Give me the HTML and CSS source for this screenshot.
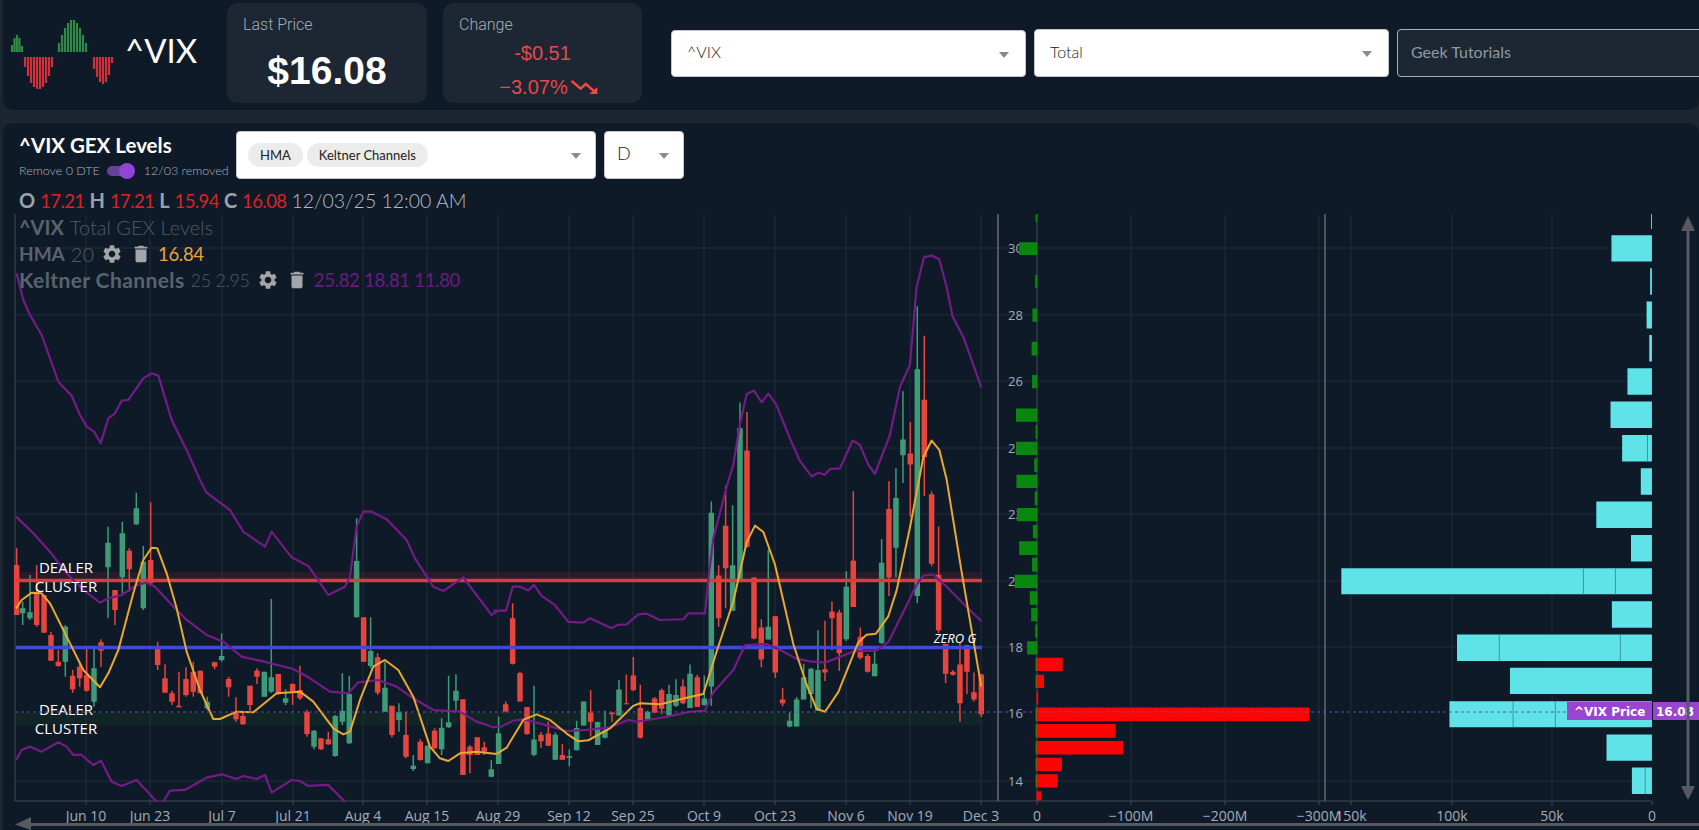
FILE: index.html
```html
<!DOCTYPE html>
<html lang="en">
<head>
<meta charset="utf-8">
<title>^VIX GEX Levels</title>
<link rel="stylesheet" href="styles.css">
</head>
<body>
<svg class="defs" width="0" height="0" aria-hidden="true">
  <symbol id="gear" viewBox="0 0 24 24"><path d="M19.14 12.94c.04-.3.06-.61.06-.94 0-.32-.02-.64-.07-.94l2.03-1.58c.18-.14.23-.41.12-.61l-1.92-3.32c-.12-.22-.37-.29-.59-.22l-2.39.96c-.5-.38-1.03-.7-1.62-.94l-.36-2.54c-.04-.24-.24-.41-.48-.41h-3.84c-.24 0-.43.17-.47.41l-.36 2.54c-.59.24-1.13.57-1.62.94l-2.39-.96c-.22-.08-.47 0-.59.22L2.74 8.87c-.12.21-.08.47.12.61l2.03 1.58c-.05.3-.09.63-.09.94s.02.64.07.94l-2.03 1.58c-.18.14-.23.41-.12.61l1.92 3.32c.12.22.37.29.59.22l2.39-.96c.5.38 1.03.7 1.62.94l.36 2.54c.05.24.24.41.48.41h3.84c.24 0 .44-.17.47-.41l.36-2.54c.59-.24 1.13-.56 1.62-.94l2.39.96c.22.08.47 0 .59-.22l1.92-3.32c.12-.22.07-.47-.12-.61l-2.01-1.58zM12 15.6c-1.98 0-3.6-1.62-3.6-3.6s1.62-3.6 3.6-3.6 3.6 1.62 3.6 3.6-1.62 3.6-3.6 3.6z"/></symbol>
  <symbol id="trash" viewBox="0 0 24 24"><path d="M6 19c0 1.1.9 2 2 2h8c1.1 0 2-.9 2-2V7H6v12zM19 4h-3.5l-1-1h-5l-1 1H5v2h14V4z"/></symbol>
</svg>

<header class="top">
  <div class="brand">
    <svg class="logo" viewBox="0 0 105 75" width="105" height="75" aria-hidden="true">
      <path class="logo-g" d="M2 35V28M4.500 35V21M7 35V18M9.500 35V21M12 35V29M49 35V26M52 35V18M55 35V11M58 35V6M61 35V3M64 35V3M67 35V6M70 35V11M73 35V18M76 35V26"/>
      <path class="logo-r" d="M15 40V50M18 40V59M21 40V66M24 40V70M27 40V72M30 40V72M33 40V70M36 40V66M39 40V59M42 40V50M84 40V52M87 40V60M90 40V65M93 40V67M96 40V65M99 40V58M102 40V46"/>
    </svg>
    <span class="symbol">^VIX</span>
  </div>
  <section class="card">
    <div class="card-label">Last Price</div>
    <div class="price">$16.08</div>
  </section>
  <section class="card">
    <div class="card-label">Change</div>
    <div class="delta">-$0.51</div>
    <div class="delta delta-pct">−3.07%<svg class="trend" viewBox="0 0 24 24" width="32" height="28" preserveAspectRatio="none" aria-hidden="true"><path d="M16 18l2.290-2.290-4.880-4.880-4 4L2 7.410 3.410 6l6 6 4-4 6.300 6.290L22 12v6z"/></svg></div>
  </section>
  <div class="controls">
    <div class="select select-top"><span>^VIX</span><i class="caret"></i></div>
    <div class="select"><span>Total</span><i class="caret"></i></div>
    <div class="search">Geek Tutorials</div>
  </div>
</header>

<main class="panel">
  <div class="panel-head">
    <div class="title-block">
      <h1 class="title">^VIX GEX Levels</h1>
      <div class="toggle-row">
        <span>Remove 0 DTE</span>
        <span class="toggle"><i class="thumb"></i></span>
        <span>12/03 removed</span>
      </div>
    </div>
    <div class="select multi">
      <span class="chip">HMA</span>
      <span class="chip">Keltner Channels</span>
      <i class="caret"></i>
    </div>
    <div class="select period"><span>D</span><i class="caret"></i></div>
  </div>

  <div class="ohlc">
    <b>O</b><em>17.21</em><b>H</b><em>17.21</em><b>L</b><em>15.94</em><b>C</b><em>16.08</em><span>12/03/25 12:00 AM</span>
  </div>

  <div class="chart-wrap">
    <div class="legend">
      <div class="legend-row"><b>^VIX</b> <span>Total GEX Levels</span></div>
      <div class="legend-row"><b class="name-hma">HMA</b> <span>20</span><svg class="ico"><use href="#gear"/></svg><svg class="ico"><use href="#trash"/></svg><span class="v-hma">16.84</span></div>
      <div class="legend-row"><b class="name-kc">Keltner Channels</b> <span class="kc-params">25 2.95</span><svg class="ico"><use href="#gear"/></svg><svg class="ico"><use href="#trash"/></svg><span class="v-kc">25.82 18.81 11.80</span></div>
    </div>

    <svg class="chart" viewBox="3 214 1696 616" width="1696" height="616" role="img" aria-label="^VIX candlestick chart with gamma exposure bars">
      <!-- grid -->
      <path class="grid" d="M15 248H1652M15 315H1652M15 381H1652M15 448H1652M15 514H1652M15 581H1652M15 647H1652M15 781H1652M86 214V801M150 214V801M222 214V801M293 214V801M363 214V801M427 214V801M498 214V801M569 214V801M633 214V801M704 214V801M775 214V801M846 214V801M910 214V801M981 214V801M1131 214V801M1225 214V801M1319 214V801M1351 214V801M1452 214V801M1552 214V801"/>
      <path class="axis" d="M15 214V801H1652M86 801V805M150 801V805M222 801V805M293 801V805M363 801V805M427 801V805M498 801V805M569 801V805M633 801V805M704 801V805M775 801V805M846 801V805M910 801V805M981 801V805M1037 214V801M1037 801V805M1131 801V805M1225 801V805M1319 801V805M1351 801V805M1452 801V805M1552 801V805M1652 801V805"/>

      <!-- dealer bands -->
      <rect class="band-red" x="16" y="572" width="966" height="10"/>
      <rect class="band-green" x="16" y="713" width="966" height="12"/>

      <!-- candles -->
      <g transform="translate(0,480) scale(.3333)">
        <path class="wick red" d="M50 205V405M110 255V440M132 345V458M153 455V542M175 510V560M218 570V638M239 545V620M260 505V635M303 478V560M345 330V435M388 205V335M452 67V318M473 485V570M495 553V638M516 632V675M537 575V682M558 562V650M580 545V650M601 572V640M644 545V568M686 590V650M708 652V725M729 695V735M750 617V695M771 565V612M835 582V645M878 610V675M900 557V660M921 690V770M963 775V810M985 755V795M1091 412V545M1133 520V645M1176 677V772M1218 695V835M1261 778V842M1304 745V808M1389 658V885M1410 795V880M1432 772V825M1453 785V825"/>
        <path class="body red" d="M50 255V405M110 340V435M132 345V458M153 465V542M175 545V558M218 587V628M239 560V595M260 585V632M303 487V512M345 330V390M388 212V268M452 240V310M473 505V555M495 595V638M516 640V665M537 677V682M558 597V645M580 575V635M601 572V640M644 547V560M686 597V622M708 697V718M729 708V733M750 617V675M771 572V590M835 582V640M878 612V635M900 630V655M921 697V762M963 775V808M985 778V793M1091 412V545M1133 532V638M1176 677V765M1218 765V830M1261 785V840M1304 752V805M1389 658V885M1410 800V825M1432 772V825M1453 802V815"/>
        <path class="wick green" d="M68 365V435M90 285V420M196 435V590M282 500V680M324 140V415M367 125V340M409 38V135M430 198V390M622 650V690M665 460V545M793 575V650M814 357V638M857 628V675M942 750V808M1006 705V830M1027 580V735M1048 587V792M1070 115V412M1112 412V565M1155 545V695M1197 670V755M1240 825V873M1283 797V850M1325 715V825M1346 587V743M1368 583V690M1474 840V892M1496 710V852"/>
        <path class="body green" d="M68 385V400M90 397V415M196 440V545M282 565V665M324 188V262M367 160V292M409 85V133M430 245V385M622 665V685M665 528V540M793 575V650M814 592V635M857 655V668M942 752V800M1006 708V828M1027 692V725M1048 642V790M1070 243V412M1112 513V558M1155 623V695M1197 697V720M1240 857V867M1283 797V850M1325 743V808M1346 727V742M1368 632V662M1474 868V890M1496 760V852"/>
      </g>
      <g transform="translate(500,250) scale(.3333,.37)">
        <path class="wick red" d="M17 1220V1250M38 955V1120M60 1140V1220M81 1235V1310M123 1303V1345M145 1275V1340M187 1335V1378M272 1190V1315M336 1250V1275M379 1148V1228M400 1100V1192M421 1175V1320M464 1208V1252M485 1185V1255M549 1160V1228M592 1148V1235M656 852V1018M677 637V968M741 438V805M762 885V1052M784 998V1128M826 990V1157M848 1183V1233M975 1002V1165M996 950V1082M1018 972V1138M1060 652V965M1081 1020V1107M1103 1092V1142M1167 625V935M1231 465V720M1273 232V665M1295 653V855M1316 747V1035M1337 1065V1170M1359 1135V1150M1380 1060V1275M1401 1068V1200M1422 1142V1220M1444 1145V1262"/>
        <path class="body red" d="M17 1228V1247M38 995V1118M60 1143V1220M81 1235V1308M123 1310V1328M145 1307V1340M187 1365V1378M272 1250V1275M336 1250V1255M379 1225V1228M400 1150V1190M421 1238V1318M464 1212V1250M485 1190V1240M549 1180V1225M592 1155V1235M656 880V995M677 745V860M741 542V802M762 885V1050M784 1020V1107M826 990V1142M848 1215V1225M975 1133V1142M996 977V995M1018 980V1090M1060 840V965M1081 1045V1102M1103 1097V1140M1167 700V885M1231 550V580M1273 405V560M1295 660V848M1316 878V1028M1337 1065V1145M1359 1140V1148M1380 1120V1225M1401 1068V1140M1422 1195V1215M1444 1147V1255"/>
        <path class="wick green" d="M102 1178V1368M166 1305V1378M208 1350V1395M230 1272V1352M251 1220V1285M293 1275V1338M315 1245V1320M357 1162V1258M443 1245V1270M507 1175V1260M528 1160V1235M570 1120V1238M613 1150V1232M634 680V1232M698 690V975M720 412V895M805 810V1053M869 1250V1290M890 1208V1288M911 1118V1215M933 1130V1238M954 1028V1245M1039 868V1057M1124 1080V1152M1145 782V1065M1188 590V885M1209 382V630M1252 152V955"/>
        <path class="body green" d="M102 1323V1365M166 1310V1378M208 1368V1373M230 1292V1352M251 1220V1285M293 1276V1338M315 1298V1318M357 1188V1258M443 1248V1268M507 1200V1258M528 1203V1232M570 1145V1238M613 1212V1230M634 710V1180M698 852V975M720 482V895M805 1018V1053M869 1272V1288M890 1215V1288M911 1155V1215M933 1132V1200M954 1135V1245M1039 910V1052M1124 1118V1152M1145 845V1062M1188 670V805M1209 512V555M1252 322V935"/>
      </g>

      <!-- levels -->
      <path class="level-red" d="M16 580.500H982"/>
      <path class="level-blue" d="M16 647.500H982"/>

      <!-- Keltner -->
      <g transform="translate(0,230) scale(.3333)">
        <path class="kc" d="M50 130L70 210L90 255L125 315L175 455L215 497L240 555L260 590L282 605L302 640L325 565L345 550L365 512L385 510L430 445L455 430L475 437L515 570L560 660L600 750"/>
      </g>
      <g transform="translate(0,480) scale(.3333)">
        <path class="kc" d="M600 0L620 38L690 90L730 155L795 200L815 155L875 232L925 258L985 345L1035 320L1050 290L1070 140L1090 95L1115 95L1160 118L1220 180L1245 235L1300 320L1330 333L1390 292L1475 405L1495 392L1520 392"/>
        <path class="kc" d="M48 110L100 160L150 215L200 280L250 330L300 368L325 355L365 345L410 315L440 308L465 320L525 385L560 420L620 465L670 485L725 530L780 542L880 567L925 592L990 635L1045 640L1075 607L1135 600L1190 620L1240 655L1300 690L1380 695L1430 725L1480 742L1500 738"/>
        <path class="kc" d="M48 840L65 810L90 800L125 815L175 787L200 800L220 825L245 825L280 855L303 842L335 905L365 918L410 900L470 965M490 965L510 932L555 930L620 893L665 883L710 897L730 888L770 897L795 885L815 938L875 900L900 903L925 918L985 915L1035 965"/>
        <path class="hma" d="M48 385L65 360L95 338L125 340L150 370L200 470L250 570L300 622L325 580L355 510L400 340L430 240L455 203L472 205L500 280L530 385L560 515L600 630L640 717L660 717L710 695L760 697L830 640L900 635L940 665L1000 745L1030 763L1050 755L1080 660L1120 560L1155 540L1195 570L1240 650L1290 800L1320 835L1345 843L1380 820L1430 815L1490 822"/>
      </g>
      <g transform="translate(500,250) scale(.3333,.37)">
        <path class="kc" d="M-20 975L18 975L38 910L60 910L85 920L102 905L125 935L165 960L205 1005L250 1007L270 995L335 1022L355 1013L380 1012L415 985L440 983L480 1000L550 998L565 982L615 982L625 890L640 780L680 640L700 580L720 470L740 390L762 380L785 412L805 388L830 420L870 510L900 570L935 612L955 602L975 607L990 592L1020 590L1058 515L1080 527L1105 580L1125 605L1170 500L1200 370L1230 310L1250 100L1272 20L1295 15L1318 25L1340 100L1358 180L1390 235L1420 310L1444 372"/>
        <path class="kc" d="M0 1290L40 1272L70 1268L130 1282L200 1300L260 1297L330 1290L385 1270L410 1275L500 1262L570 1248L615 1245L640 1195L700 1135L735 1068L800 1065L850 1085L890 1105L930 1112L975 1115L1010 1103L1060 1085L1130 1082L1165 1060L1220 960L1250 905L1270 880L1300 877L1340 910L1400 965L1444 1003"/>
        <path class="hma" d="M-10 1362L20 1345L70 1270L110 1255L150 1270L200 1307L235 1328L265 1325L330 1293L400 1232L420 1225L480 1228L560 1210L610 1200L650 1085L700 950L740 790L765 745L790 762L825 850L880 1065L920 1175L950 1240L975 1248L1015 1195L1075 1060L1100 1040L1128 1037L1165 990L1190 920L1230 750L1270 560L1295 515L1318 540L1340 620L1385 870L1444 1180"/>
      </g>

      <!-- annotations -->
      <text class="note" x="66" y="573">DEALER</text>
      <text class="note" x="66" y="592">CLUSTER</text>
      <text class="note" x="66" y="715">DEALER</text>
      <text class="note" x="66" y="734">CLUSTER</text>
      <text class="note-i" x="955" y="643">ZERO G</text>

      <!-- price axis labels -->
      <g class="tick-y">
        <text x="1008" y="253">30</text><text x="1008" y="320">28</text><text x="1008" y="386">26</text><text x="1008" y="453">24</text><text x="1008" y="519">22</text><text x="1008" y="586">20</text><text x="1008" y="652">18</text><text x="1008" y="718">16</text><text x="1008" y="786">14</text>
      </g>

      <!-- gex bars -->
      <g transform="translate(1000,200) scale(.445,.4016)">
        <path class="bar-green" d="M80 35H84V55H80ZM43 105H84V137H43ZM79 187H84V220H79ZM73 270H84V303H73ZM71 353H84V387H71ZM72 436H84V469H72ZM36 519H84V552H36ZM80 560H84V595H80ZM36 602H84V635H36ZM77 643H84V677H77ZM37 684H84V717H37ZM78 726H84V760H78ZM38 767H84V800H38ZM74 809H84V842H74ZM43 850H84V884H43ZM72 891H84V925H72ZM33 933H84V966H33ZM67 974H84V1008H67ZM70 1016H84V1049H70ZM79 1057H84V1090H79ZM61 1099H84V1132H61Z"/>
        <path class="bar-edge" d="M80 1140H84V1173H80ZM80 1182H84V1215H80ZM80 1264H84V1298H80ZM80 1305H84V1339H80ZM80 1347H84V1381H80ZM80 1389H84V1422H80ZM80 1430H84V1463H80Z"/>
        <path class="bar-red" d="M84 1140H141V1173H84ZM84 1182H99V1215H84ZM82 1223H86V1256H82ZM84 1264H695V1298H84ZM84 1305H260V1339H84ZM84 1347H277V1381H84ZM84 1389H139V1422H84ZM84 1430H130V1463H84ZM82 1472H93V1495H82Z"/>
        <path class="bar-cyan" d="M1463 35H1465V72H1463ZM1374 88H1465V153H1374ZM1461 170H1465V236H1461ZM1453 253H1465V320H1453ZM1459 336H1465V402H1459ZM1410 419H1465V485H1410ZM1372 502H1465V568H1372ZM1398 585H1465V651H1398ZM1440 668H1465V734H1440ZM1340 751H1465V817H1340ZM1418 834H1465V900H1418ZM767 917H1465V982H767ZM1375 999H1465V1065H1375ZM1027 1082H1465V1148H1027ZM1146 1165H1465V1230H1146ZM1010 1248H1465V1313H1010ZM1363 1331H1465V1396H1363ZM1420 1413H1465V1479H1420Z"/>
        <path class="bar-div" d="M1455 585V651M1311 917V982M1383 917V982M1122 1082V1148M1394 1082V1148M1153 1248V1313M1248 1248V1313M1450 1413V1479"/>
      </g>

      <!-- separators -->
      <path class="sep" d="M998 214V801M1325 214V801"/>

      <!-- current price -->
      <path class="last" d="M15 712H1567"/>
      <rect class="tag" x="1567" y="702" width="85" height="18"/>
      <rect class="tag" x="1653" y="702" width="46" height="18"/>
      <text class="tag-t" x="1574" y="716">^VIX Price</text>
      <text class="tag-t" x="1656" y="716">16.08</text>

      <!-- x axis labels -->
      <g class="tick-x">
        <text x="86" y="821">Jun 10</text><text x="150" y="821">Jun 23</text><text x="222" y="821">Jul 7</text><text x="293" y="821">Jul 21</text><text x="363" y="821">Aug 4</text><text x="427" y="821">Aug 15</text><text x="498" y="821">Aug 29</text><text x="569" y="821">Sep 12</text><text x="633" y="821">Sep 25</text><text x="704" y="821">Oct 9</text><text x="775" y="821">Oct 23</text><text x="846" y="821">Nov 6</text><text x="910" y="821">Nov 19</text><text x="981" y="821">Dec 3</text>
        <text x="1037" y="821">0</text><text x="1131" y="821">−100M</text><text x="1225" y="821">−200M</text><text x="1319" y="821">−300M</text><text x="1351" y="821">150k</text><text x="1452" y="821">100k</text><text x="1552" y="821">50k</text><text x="1652" y="821">0</text>
      </g>

      <!-- scroll arrows -->
      <path class="scroll-line" d="M22 824.500H1699M1688 222V794"/>
      <path class="scroll-head" d="M15 824.500L31 817V830ZM1688 216L1695 231H1681ZM1688 800L1695 786H1681Z"/>
    </svg>
  </div>
</main>
</body>
</html>
```
FILE: styles.css
```css
* { box-sizing: border-box; }

html, body { margin: 0; height: 100%; overflow: hidden; }

body {
  width: 1699px;
  height: 830px;
  background: #1b2630;
  color: #fff;
  font-family: Lato, "Open Sans", sans-serif;
}

.defs { display: block; height: 0; }

/* top bar */
.top {
  display: flex;
  align-items: flex-start;
  height: 110px;
  margin-left: 3px;
  padding-top: 3px;
  background: #0f1a28;
  border-radius: 0 0 10px 10px;
}

.brand {
  display: flex;
  flex: none;
  align-items: center;
  width: 224px;
  height: 100px;
  padding: 0 0 0 7px;
}

.logo { flex: none; margin-top: 2px; }

.logo-g { stroke: #2f8a45; stroke-width: 2.200; fill: none; }
.logo-r { stroke: #d0303a; stroke-width: 2.200; fill: none; }

.symbol {
  margin-left: 10px;
  margin-top: -6px;
  font-size: 33px;
  font-weight: 400;
  line-height: 1;
}

.card {
  flex: none;
  width: 200px;
  height: 100px;
  margin-right: 16px;
  padding: 11px 16px 0;
  background: #1c2733;
  border-radius: 11px;
}

.card + .card { width: 199px; margin-right: 0; }

.card-label {
  font-size: 16px;
  line-height: 22px;
  color: #a5adb6;
  font-family: Roboto, sans-serif;
  font-weight: 300;
}

.price {
  margin-top: 13px;
  text-align: center;
  font-family: "Liberation Sans", sans-serif;
  font-weight: 700;
  font-size: 39px;
  line-height: 44px;
}

.delta {
  text-align: center;
  margin-top: 4px;
  color: #e5484d;
  font-family: "Liberation Sans", sans-serif;
  font-size: 20px;
  line-height: 26px;
}

.delta-pct {
  display: flex;
  justify-content: center;
  align-items: center;
  margin-top: 7px;
  padding-left: 14px;
}

.trend { fill: #f0493f; }

.controls {
  display: flex;
  flex: none;
  gap: 8px;
  margin: 26px 0 0 29px;
}

.select {
  position: relative;
  display: flex;
  align-items: center;
  flex: none;
  width: 355px;
  height: 48px;
  padding: 0 15px 4px;
  background: #fff;
  border: 1px solid #c3c6ca;
  border-radius: 4px;
  color: #222;
  font-size: 16px;
  font-weight: 300;
}

.select-top { height: 47px; margin-top: 1px; }

.caret {
  position: absolute;
  right: 14px;
  top: 50%;
  margin-top: -2px;
  border-top: 6px solid #8a8a8a;
  border-left: 5px solid transparent;
  border-right: 5px solid transparent;
}

.controls .caret { right: 16px; }

.search {
  flex: none;
  width: 330px;
  height: 48px;
  padding: 0 13px 4px;
  display: flex;
  align-items: center;
  background: #1c2733;
  border: 1px solid #a8b0b8;
  border-radius: 4px;
  color: #8f99a4;
  font-size: 16px;
}

/* main panel */
.panel {
  margin: 13px 0 0 3px;
  height: 707px;
  background: #0f1a28;
  border-radius: 10px 10px 0 0;
}

.panel-head {
  display: flex;
  align-items: flex-start;
  gap: 8px;
  padding: 8px 0 0 16px;
  height: 56px;
}

.title-block { width: 209px; flex: none; }

.title {
  margin: 2px 0 0;
  font-size: 20.500px;
  font-weight: 700;
  line-height: 24px;
  color: #fff;
  white-space: nowrap;
}

.toggle-row {
  display: flex;
  align-items: center;
  margin-top: 6px;
  font-size: 12.500px;
  font-weight: 300;
  color: #aab2bb;
  white-space: nowrap;
}

.toggle {
  position: relative;
  flex: none;
  width: 22px;
  height: 10px;
  margin: 0 15px 0 7px;
  background: #67409c;
  border-radius: 5px;
}

.thumb {
  position: absolute;
  right: -6px;
  top: -3px;
  width: 16px;
  height: 16px;
  background: #9443d6;
  border-radius: 50%;
}

.multi { width: 360px; gap: 4px; padding: 0 11px; }

.chip {
  display: inline-flex;
  align-items: center;
  height: 24px;
  padding: 0 12px;
  background: #ececec;
  border-radius: 12px;
  color: #222;
  font-size: 13px;
  font-weight: 400;
  white-space: nowrap;
}

.period { width: 80px; padding: 0 12px 4px; font-size: 18px; }

.ohlc {
  display: flex;
  align-items: baseline;
  gap: 5px;
  height: 35px;
  padding: 9px 0 0 16px;
  font-size: 20px;
  line-height: 24px;
  white-space: nowrap;
}

.ohlc b { font-weight: 700; color: #9aa3ad; }
.ohlc em { font-style: normal; color: #df1f22; font-weight: 400; font-size: 18.500px; letter-spacing: -.6px; }
.ohlc span { font-weight: 300; color: #b6bdc5; font-size: 19.500px; }

.chart-wrap { position: relative; }

.chart { display: block; }

.legend {
  position: absolute;
  left: 16px;
  top: 0;
  z-index: 1;
  font-size: 20px;
  line-height: 26.500px;
  color: #4f5a67;
  white-space: nowrap;
}

.legend-row { display: flex; align-items: center; gap: 6px; height: 26.500px; }
.legend-row b { font-weight: 700; color: #59636f; }
.legend-row span { font-weight: 300; }

.legend-row .name-hma { font-size: 19px; }
.legend-row .name-kc { font-size: 21px; letter-spacing: .4px; }
.legend-row .kc-params { font-size: 18px; letter-spacing: -.3px; }

.ico { flex: none; width: 22px; height: 22px; fill: #a2a6ab; margin-left: 1px; }

.legend-row .v-hma { color: #e6a53c; font-weight: 400; font-size: 18.500px; letter-spacing: -.3px; }
.legend-row .v-kc { color: #6a1b80; font-weight: 400; font-size: 18.500px; letter-spacing: -.3px; }

/* chart parts */
.grid { stroke: #212d3c; stroke-width: 1; fill: none; }
.axis { stroke: #404b59; stroke-width: 1; fill: none; }

.band-red { fill: #8a2530; fill-opacity: .2; }
.band-green { fill: #163a26; fill-opacity: .3; }

.wick, .body, .kc, .hma, .bar-div {
  fill: none;
  vector-effect: non-scaling-stroke;
}

.wick { stroke-width: 1.500; }
.body { stroke-width: 5.500; }
.red { stroke: #e5453c; }
.green { stroke: #3f9a78; }

.level-red { stroke: #d4403f; stroke-width: 3.500; }
.level-blue { stroke: #3f4bd8; stroke-width: 3.500; }

.kc { stroke: #741b86; stroke-width: 2.200; stroke-linejoin: round; }
.hma { stroke: #e8a92f; stroke-width: 2; stroke-linejoin: round; }

.note {
  fill: #fff;
  font-family: "Open Sans", sans-serif;
  font-size: 15px;
  text-anchor: middle;
}

.note-i {
  fill: #fff;
  font-family: "Open Sans", sans-serif;
  font-size: 13px;
  font-style: italic;
  text-anchor: middle;
}

.tick-y text {
  fill: #a3adba;
  font-family: "Open Sans", sans-serif;
  font-size: 13px;
}

.tick-x text {
  fill: #a3adba;
  font-family: "Open Sans", sans-serif;
  font-size: 14px;
  text-anchor: middle;
}

.bar-green { fill: #0a870f; }
.bar-edge { fill: #5f6a14; }
.bar-red { fill: #fb0404; }
.bar-cyan { fill: #5fe3e8; }
.bar-div { stroke: #3a97a3; stroke-width: 1; }

.sep { stroke: #50565c; stroke-width: 2; fill: none; }

.last { stroke: #6a48b8; stroke-width: 1; stroke-dasharray: 3 3; fill: none; }

.tag { fill: #9a45cf; }

.tag-t {
  fill: #fff;
  font-family: "DejaVu Sans", sans-serif;
  font-weight: 700;
  font-size: 12px;
}

.scroll-line { stroke: #565a5f; stroke-width: 3; fill: none; }
.scroll-head { fill: #565a5f; }
```
